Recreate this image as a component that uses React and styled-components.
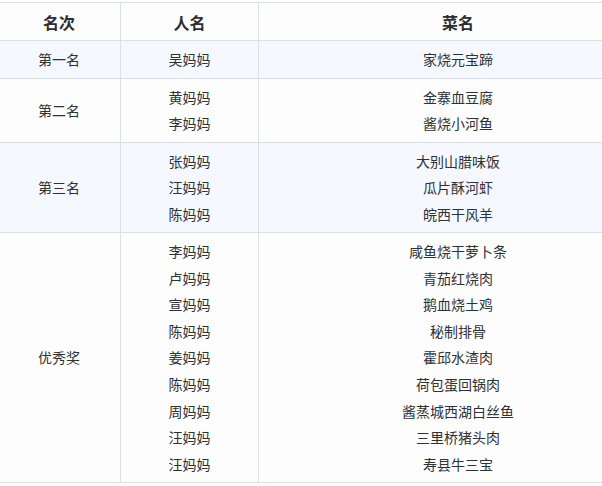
import React from 'react';
import styled, { createGlobalStyle } from 'styled-components';

const GlobalStyle = createGlobalStyle`
  html, body {
    margin: 0;
    padding: 0;
    background: #fdfdfd;
  }
  body {
    font-family: 'Liberation Sans', 'Noto Sans CJK SC', sans-serif;
    color: #2f3133;
  }
`;

const Wrap = styled.div`
  width: 602px;
  overflow: hidden;
  padding-top: 2px;
`;

const Table = styled.table`
  border-collapse: collapse;
  width: 660px;
  margin-left: -3px;
  table-layout: fixed;
`;

const Th = styled.th`
  width: ${(p) => p.w}px;
  height: 38px;
  padding: 1px 5px 0;
  box-sizing: border-box;
  font-size: 16px;
  font-weight: bold;
  color: #2b2d2f;
  text-align: center;
  background: #fdfdfd;
  border: 1px solid #dcdfe3;
`;

const Tr = styled.tr`
  background: ${(p) => (p.striped ? '#f5f9ff' : '#fdfdfd')};
`;

const Td = styled.td`
  padding: 6px 5px 4px;
  font-size: 14px;
  line-height: 26.55px;
  text-align: center;
  vertical-align: middle;
  border: 1px solid #dcdfe3;
`;

const Line = styled.div`
  white-space: nowrap;
`;

const groups = [
  {
    rank: '第一名',
    entries: [['吴妈妈', '家烧元宝蹄']],
  },
  {
    rank: '第二名',
    entries: [
      ['黄妈妈', '金寨血豆腐'],
      ['李妈妈', '酱烧小河鱼'],
    ],
  },
  {
    rank: '第三名',
    entries: [
      ['张妈妈', '大别山腊味饭'],
      ['汪妈妈', '瓜片酥河虾'],
      ['陈妈妈', '皖西干风羊'],
    ],
  },
  {
    rank: '优秀奖',
    entries: [
      ['李妈妈', '咸鱼烧干萝卜条'],
      ['卢妈妈', '青茄红烧肉'],
      ['宣妈妈', '鹅血烧土鸡'],
      ['陈妈妈', '秘制排骨'],
      ['姜妈妈', '霍邱水渣肉'],
      ['陈妈妈', '荷包蛋回锅肉'],
      ['周妈妈', '酱蒸城西湖白丝鱼'],
      ['汪妈妈', '三里桥猪头肉'],
      ['汪妈妈', '寿县牛三宝'],
    ],
  },
];

export default function App() {
  return (
    <>
      <GlobalStyle />
      <Wrap>
        <Table>
          <thead>
            <tr>
              <Th w={123}>名次</Th>
              <Th w={138}>人名</Th>
              <Th w={399}>菜名</Th>
            </tr>
          </thead>
          <tbody>
            {groups.map((g, i) => (
              <Tr key={g.rank} striped={i % 2 === 0}>
                <Td>{g.rank}</Td>
                <Td>
                  {g.entries.map(([name], j) => (
                    <Line key={j}>{name}</Line>
                  ))}
                </Td>
                <Td>
                  {g.entries.map(([, dish], j) => (
                    <Line key={j}>{dish}</Line>
                  ))}
                </Td>
              </Tr>
            ))}
          </tbody>
        </Table>
      </Wrap>
    </>
  );
}
